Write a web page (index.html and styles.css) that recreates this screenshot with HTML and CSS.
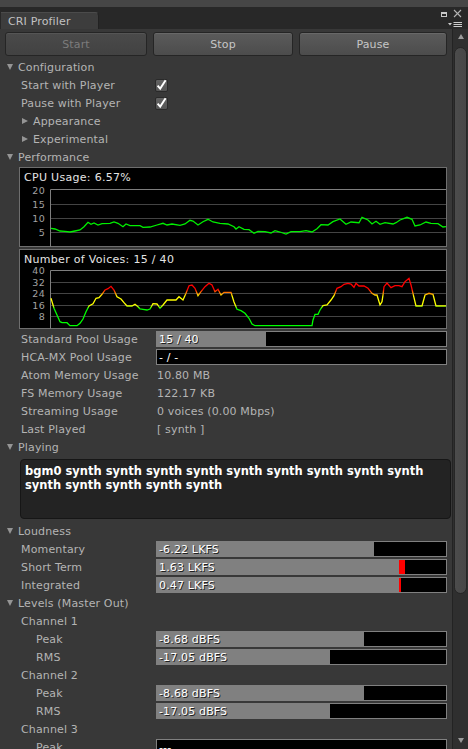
FILE: index.html
```html
<!DOCTYPE html>
<html>
<head>
<meta charset="utf-8">
<link rel="stylesheet" href="styles.css">
</head>
<body>
<div class="window">
  <div class="topstrip"></div>
  <div class="tabbar">
    <div class="tab">CRI Profiler</div>
    <svg class="winctl" width="30" height="22" viewBox="438 7 30 22">
      <rect x="441.5" y="12.5" width="5" height="4" fill="none" stroke="#c8c8c8" stroke-width="1"/>
      <line x1="441" y1="13" x2="447" y2="13" stroke="#c8c8c8" stroke-width="2"/>
      <line x1="454" y1="10" x2="461" y2="17" stroke="#b4b4b4" stroke-width="1.1"/>
      <line x1="461" y1="10" x2="454" y2="17" stroke="#b4b4b4" stroke-width="1.1"/>
      <polygon points="448,23 452,23 450,25.5" fill="#cccccc"/>
      <line x1="453.5" y1="22.5" x2="462" y2="22.5" stroke="#cccccc" stroke-width="1"/>
      <line x1="453.5" y1="24.5" x2="462" y2="24.5" stroke="#cccccc" stroke-width="1"/>
      <line x1="453.5" y1="26.5" x2="462" y2="26.5" stroke="#cccccc" stroke-width="1"/>
    </svg>
  </div>
  <div class="main">
    <div class="content">
      <div class="toolbar">
        <div class="btn disabled">Start</div>
        <div class="btn">Stop</div>
        <div class="btn">Pause</div>
      </div>

      <div class="row header"><span class="fold open"></span><span class="htext">Configuration</span></div>
      <div class="row field"><span class="label">Start with Player</span><span class="check"><svg width="13" height="13" viewBox="0 0 13 13"><path d="M2.6 6.6 L5.2 9.6 L10.6 1.2" fill="none" stroke="#ffffff" stroke-width="1.9"/></svg></span></div>
      <div class="row field"><span class="label">Pause with Player</span><span class="check"><svg width="13" height="13" viewBox="0 0 13 13"><path d="M2.6 6.6 L5.2 9.6 L10.6 1.2" fill="none" stroke="#ffffff" stroke-width="1.9"/></svg></span></div>
      <div class="row subheader"><span class="fold closed"></span><span class="htext">Appearance</span></div>
      <div class="row subheader"><span class="fold closed"></span><span class="htext">Experimental</span></div>
      <div class="row header"><span class="fold open"></span><span class="htext">Performance</span></div>

      <div class="graph cpu">
        <svg width="428" height="80" viewBox="19 167 428 80">
          <rect x="19" y="167" width="428" height="80" fill="#000"/>
          <rect x="19.5" y="167.5" width="427" height="79" fill="none" stroke="#6e6e6e"/>
          <g stroke="#444444" stroke-width="1">
            <line x1="51" y1="204.5" x2="446" y2="204.5"/>
            <line x1="51" y1="218.5" x2="446" y2="218.5"/>
            <line x1="51" y1="232.5" x2="446" y2="232.5"/>
          </g>
          <line x1="50.5" y1="189.5" x2="446" y2="189.5" stroke="#7e7e7e"/>
          <line x1="50.5" y1="189.5" x2="50.5" y2="247" stroke="#7e7e7e"/>
          <text class="gtitle" x="24" y="181">CPU Usage: 6.57%</text>
          <g class="gaxis">
            <text x="45" y="193.5">20</text>
            <text x="45" y="207.5">15</text>
            <text x="45" y="221.5">10</text>
            <text x="45" y="235.5">5</text>
          </g>
          <polyline fill="none" stroke="#00f000" stroke-width="1.3" points="51,228.3 55,229 60,231 65,231.3 70,232 75,231 80,230 84,226.7 88,222.3 91,224.3 94,223 98,225 102,223.7 110,223.3 114,222 118,223.3 123,226.7 126,224 130,225.7 140,225.7 143,227.3 150,227 157,225 163,223.3 167,225 172,224 180,225.3 185,224 190,220.3 193,221 198,225 203,221.7 208,219.3 213,222 220,223.3 228,224 234,226.7 236,229 239,226.7 244,229.3 249,229.7 254,233.3 258,231.3 265,231.7 271,233 275,230.7 280,232 286,234 291,231.7 300,231.7 306,230.7 312,232 317,228.7 321,224.7 328,225 333,221.7 340,219 346,224.3 351,222 359,222.7 362,217.3 368,220 372,224 376,221.3 380,224.3 385,222.7 393,224 396,222.7 400,220 407,217.3 412,219.3 415,226 420,225 426,222 431,223.3 438,223.7 443,227 446,226.7"/>
        </svg>
      </div>

      <div class="graph voices">
        <svg width="428" height="80" viewBox="19 249 428 80">
          <defs>
            <linearGradient id="vgrad" gradientUnits="userSpaceOnUse" x1="0" y1="327" x2="0" y2="270">
              <stop offset="0" stop-color="#00ff00"/>
              <stop offset="0.32" stop-color="#00ff00"/>
              <stop offset="0.38" stop-color="#ffff00"/>
              <stop offset="0.54" stop-color="#ffff00"/>
              <stop offset="0.66" stop-color="#ff0000"/>
              <stop offset="1" stop-color="#ff0000"/>
            </linearGradient>
          </defs>
          <rect x="19" y="249" width="428" height="80" fill="#000"/>
          <rect x="19.5" y="249.5" width="427" height="79" fill="none" stroke="#6e6e6e"/>
          <g stroke="#444444" stroke-width="1">
            <line x1="51" y1="282.5" x2="446" y2="282.5"/>
            <line x1="51" y1="293.5" x2="446" y2="293.5"/>
            <line x1="51" y1="305.5" x2="446" y2="305.5"/>
            <line x1="51" y1="316.5" x2="446" y2="316.5"/>
          </g>
          <line x1="50.5" y1="270.5" x2="446" y2="270.5" stroke="#7e7e7e"/>
          <line x1="50.5" y1="270.5" x2="50.5" y2="329" stroke="#7e7e7e"/>
          <text class="gtitle" x="24" y="263">Number of Voices: 15 / 40</text>
          <g class="gaxis">
            <text x="45" y="274">40</text>
            <text x="45" y="285.5">32</text>
            <text x="45" y="297">24</text>
            <text x="45" y="308.5">16</text>
            <text x="45" y="320">8</text>
          </g>
          <polyline fill="none" stroke="url(#vgrad)" stroke-width="1.3" points="51,298.3 54,308.3 57,315 60,321.7 62,322.7 67,322.7 70,325.7 77,325.7 80,323.3 83,319 86,311.7 89,306 93,303.7 96,298.3 99,297.7 102,294.3 105,290 108,288.7 111,286.3 114,290 117,296.7 121,299 124,302.7 127,306 132,306 135,304.3 138,306.7 140,309 143,309.3 147,310 150,309 153,303.7 157,304 160,308.3 163,305 167,300 176,300 179,296.7 183,300 186,293.3 189,285.7 192,285 195,288.3 198,295.7 201,291.7 205,286.7 209,283.3 212,285 215,291.7 218,289.3 221,295 224,292.3 231,292.3 234,302 237,309.3 241,310.7 245,313.3 249,318.3 252,324 255,325.7 312,325.7 313,320 315,314.3 318,314.3 320,310 323,305.7 327,305 331,300 334,295.7 337,288.3 341,286.7 344,284.3 348,283.3 351,284 354,287.3 356,283.3 359,286 364,286 368,288.3 372,293.3 375,295 377,295 380,305 382,301.7 383,295 384,286.7 387,283 391,287.7 395,285.7 399,285.7 402,286.7 405,281.7 409,278.3 411,285 414,297.7 416,306 422,306 425,295 429,293.3 433,294.3 436,306 446,306"/>
        </svg>
      </div>

      <div class="row field first"><span class="label">Standard Pool Usage</span><div class="bar" style="--v:109px">15 / 40</div></div>
      <div class="row field"><span class="label">HCA-MX Pool Usage</span><div class="bar" style="--v:0px">- / -</div></div>
      <div class="row field"><span class="label">Atom Memory Usage</span><span class="value">10.80 MB</span></div>
      <div class="row field"><span class="label">FS Memory Usage</span><span class="value">122.17 KB</span></div>
      <div class="row field"><span class="label">Streaming Usage</span><span class="value">0 voices (0.00 Mbps)</span></div>
      <div class="row field"><span class="label">Last Played</span><span class="value">[ synth ]</span></div>

      <div class="row header"><span class="fold open"></span><span class="htext">Playing</span></div>
      <div class="playing">bgm0 synth synth synth synth synth synth synth synth synth synth synth synth synth synth</div>

      <div class="row header"><span class="fold open"></span><span class="htext">Loudness</span></div>
      <div class="row field"><span class="label">Momentary</span><div class="bar" style="--v:217px">-6.22 LKFS</div></div>
      <div class="row field"><span class="label">Short Term</span><div class="bar" style="--v:242px;--r:248px">1.63 LKFS</div></div>
      <div class="row field"><span class="label">Integrated</span><div class="bar" style="--v:242px;--r:244px">0.47 LKFS</div></div>

      <div class="row header"><span class="fold open"></span><span class="htext">Levels (Master Out)</span></div>
      <div class="row field"><span class="label">Channel 1</span></div>
      <div class="row field sub"><span class="label">Peak</span><div class="bar" style="--v:207px">-8.68 dBFS</div></div>
      <div class="row field sub"><span class="label">RMS</span><div class="bar" style="--v:173px">-17.05 dBFS</div></div>
      <div class="row field"><span class="label">Channel 2</span></div>
      <div class="row field sub"><span class="label">Peak</span><div class="bar" style="--v:207px">-8.68 dBFS</div></div>
      <div class="row field sub"><span class="label">RMS</span><div class="bar" style="--v:173px">-17.05 dBFS</div></div>
      <div class="row field"><span class="label">Channel 3</span></div>
      <div class="row field sub"><span class="label">Peak</span><div class="bar" style="--v:0px">---</div></div>
    </div>
    <div class="scrollbar">
      <span class="arrow up"></span>
      <div class="thumb"></div>
      <span class="arrow down"></span>
    </div>
  </div>
</div>
</body>
</html>
```

FILE: styles.css
```css
html, body {
  margin: 0;
  padding: 0;
  width: 468px;
  height: 749px;
  overflow: hidden;
  background: #383838;
}

body {
  font-family: "DejaVu Sans", "Liberation Sans", sans-serif;
  font-size: 11px;
  letter-spacing: 0.15px;
  color: #b4b4b4;
}

.window {
  display: flex;
  flex-direction: column;
  height: 749px;
}

.topstrip {
  height: 7px;
  background: #464646;
  flex: none;
}

.tabbar {
  height: 22px;
  flex: none;
  background: #282828;
  display: flex;
  align-items: flex-end;
}

.tab {
  margin-left: 1px;
  width: 98px;
  height: 17px;
  box-sizing: border-box;
  background: #3d3d3d;
  border-top: 1px solid #4b4b4b;
  border-right: 1px solid #222;
  border-top-right-radius: 4px;
  padding-left: 7px;
  padding-top: 1px;
  line-height: 15px;
  color: #c2c2c2;
}

.winctl {
  margin-left: auto;
  display: block;
  align-self: stretch;
}

.main {
  flex: 1;
  display: flex;
  min-height: 0;
}

.content {
  width: 452px;
  flex: none;
  overflow: hidden;
}

.toolbar {
  display: grid;
  grid-template-columns: 142px 140px 148px;
  column-gap: 6px;
  padding: 3px 5px 2px 5px;
}

.btn {
  height: 24px;
  box-sizing: border-box;
  border: 1px solid #252525;
  border-radius: 3px;
  background: linear-gradient(#5b5b5b, #4c4c4c);
  box-shadow: inset 0 1px 0 #686868;
  color: #c6c6c6;
  text-align: center;
  padding-top: 1px;
  line-height: 21px;
}

.btn.disabled {
  color: #7c7c7c;
  background: linear-gradient(#4a4a4a, #424242);
  box-shadow: inset 0 1px 0 #555;
}

.row {
  height: 18px;
  display: flex;
  align-items: center;
  white-space: nowrap;
}

.row .label,
.row .value,
.row .htext {
  padding-top: 2px;
  line-height: 16px;
}

.row.header {
  padding-left: 7px;
}

.row.subheader {
  padding-left: 22px;
}

.fold {
  display: inline-block;
  width: 0;
  height: 0;
  margin-right: 5px;
}

.fold.open {
  border-left: 3.5px solid transparent;
  border-right: 3.5px solid transparent;
  border-top: 6px solid #959595;
}

.fold.closed {
  border-top: 3.5px solid transparent;
  border-bottom: 3.5px solid transparent;
  border-left: 6px solid #959595;
}

.row.field .label {
  width: 135px;
  padding-left: 21px;
  flex: none;
}

.row.field.sub .label {
  width: 120px;
  padding-left: 36px;
}

.row.field.first {
  margin-top: 1px;
}

.value {
  padding-left: 1px;
}

.check {
  width: 13px;
  height: 13px;
  box-sizing: border-box;
  margin-left: -1px;
  border: 1px solid #2a2a2a;
  border-radius: 2px;
  background: linear-gradient(#626262, #555555);
  display: flex;
  align-items: center;
  justify-content: center;
}

.check svg {
  display: block;
  flex: none;
}

.graph {
  margin-left: 19px;
  width: 428px;
  height: 80px;
}

.graph svg {
  display: block;
}

.graph.cpu {
  margin-top: 1px;
}

.graph.voices {
  margin-top: 2px;
}

.gtitle {
  fill: #e4e4e4;
  font-family: "DejaVu Sans", sans-serif;
  font-size: 11px;
  letter-spacing: 0.3px;
}

.gaxis text {
  fill: #a2a2a2;
  font-family: "DejaVu Sans", sans-serif;
  font-size: 9.5px;
  text-anchor: end;
  letter-spacing: 0.3px;
}

.bar {
  --r: var(--v);
  width: 291px;
  height: 16px;
  box-sizing: border-box;
  border: 1px solid #808080;
  background: linear-gradient(to right, #808080 var(--v), #ff0000 var(--v), #ff0000 var(--r), #000000 var(--r));
  background-repeat: no-repeat;
  color: #ffffff;
  padding-top: 1px;
  line-height: 13px;
  padding-left: 2px;
  text-shadow: 1px 1px 0 rgba(0, 0, 0, 0.75);
}

.playing {
  margin: 3px 1px 3px 20px;
  width: 431px;
  height: 60px;
  box-sizing: border-box;
  border: 1px solid #161616;
  border-radius: 4px;
  background: #232323;
  padding: 4px 4px 3px 4px;
  font-weight: bold;
  font-size: 11.5px;
  letter-spacing: 0;
  line-height: 14px;
  color: #ffffff;
}

.scrollbar {
  width: 16px;
  flex: none;
  box-sizing: border-box;
  background: #2f2f2f;
  border-left: 1px solid #232323;
  display: flex;
  flex-direction: column;
  align-items: center;
  padding-top: 5px;
}

.arrow {
  width: 0;
  height: 0;
  flex: none;
}

.arrow.up {
  border-left: 3px solid transparent;
  border-right: 3px solid transparent;
  border-bottom: 5px solid #9a9a9a;
}

.thumb {
  margin-top: 8px;
  width: 13px;
  height: 547px;
  box-sizing: border-box;
  border: 1px solid #262626;
  border-radius: 7px;
  background: linear-gradient(to right, #4c4c4c, #474747);
  flex: none;
}

.arrow.down {
  margin-top: auto;
  margin-bottom: 6px;
  border-left: 3px solid transparent;
  border-right: 3px solid transparent;
  border-top: 5px solid #9a9a9a;
}
```
